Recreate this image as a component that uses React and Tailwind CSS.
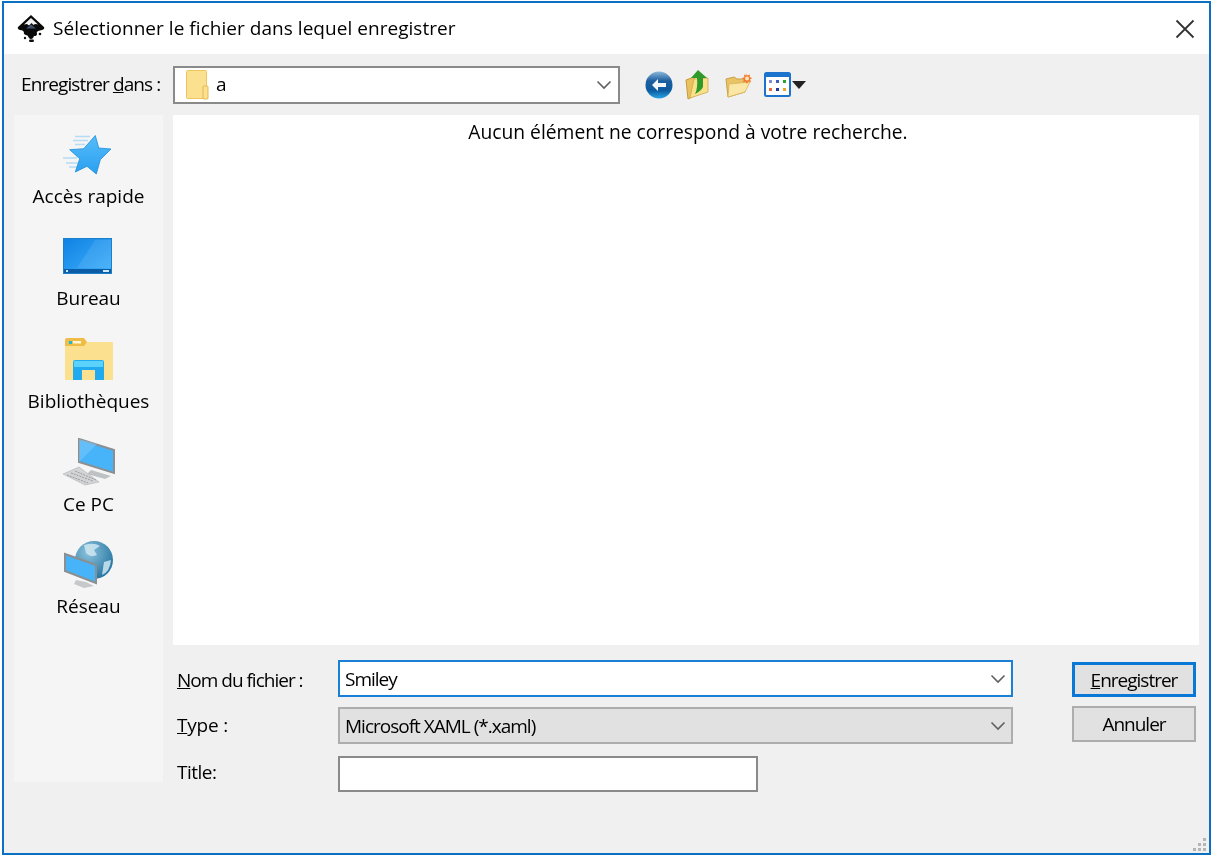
const InkscapeLogo = () => (
  <svg width="28" height="27" viewBox="0 0 28 27">
    <path d="M14 0 L27 12 Q28 14 25 15 L21 16 Q19 17 20 19 Q20 21 17 21 L16 23 Q14 25 12 23 Q11 20 9 20 Q6 19 7 17 Q6 15 3 15 Q0 14 1 12 Z" fill="#0a0a0a" />
    <path d="M14 3 L21 9.5 Q18 8.5 16.5 10 L14.5 8 L12 10.5 L10 9 L7 9.5 Z" fill="#f2f2f2" />
    <path d="M14 9.5 L19 13.5 H9 Z" fill="#3e4f6e" />
    <circle cx="23" cy="19" r="1.3" fill="#111" />
    <circle cx="8" cy="23" r="1.2" fill="#111" />
    <rect x="12" y="24.5" width="5" height="2.5" rx="1.2" fill="#111" />
  </svg>
);

const SmallFolder = () => (
  <svg width="23" height="30" viewBox="0 0 23 30">
    <rect x="0.5" y="0.5" width="20" height="28" rx="1" fill="#fbe08f" stroke="#eec65d" />
    <rect x="17" y="16" width="5" height="13" rx="1" fill="#fbe08f" stroke="#e3b84f" />
  </svg>
);

const Chevron = () => (
  <svg width="16" height="10" viewBox="0 0 16 10" fill="none">
    <path d="M1.5 1.5 L8 8 L14.5 1.5" stroke="#606060" strokeWidth="1.6" />
  </svg>
);

const BackIcon = () => (
  <svg width="28" height="28" viewBox="0 0 28 28">
    <defs>
      <linearGradient id="back" x1="0" y1="0" x2="0" y2="1">
        <stop offset="0" stopColor="#8db8da" />
        <stop offset="0.35" stopColor="#1c5f9f" />
        <stop offset="0.7" stopColor="#0d5a9e" />
        <stop offset="1" stopColor="#25a6e6" />
      </linearGradient>
    </defs>
    <circle cx="14" cy="14" r="13.5" fill="url(#back)" />
    <path d="M7 14 L13 8 V12 H21 V16 H13 V20 Z" fill="#f2f7fb" />
  </svg>
);

const UpFolderIcon = () => (
  <svg width="26" height="30" viewBox="0 0 26 30">
    <path d="M1 10 L9 7 L11 25 L3 29 Z" fill="#e9c25f" stroke="#c79b3a" />
    <path d="M9 9 L23 8 L23 22 L5 28 Z" fill="#f9e08a" stroke="#d2a94a" strokeWidth="0.8" />
    <path d="M13 0 L22 8 L18 8 L18 17 Q16 21 10 24 Q13 18 12 8 L6 8 Z" fill="#2f9a2a" />
  </svg>
);

const NewFolderIcon = () => (
  <svg width="28" height="26" viewBox="0 0 28 26">
    <path d="M1 7 L9 5 L12 7 L20 7 L20 20 L3 25 Z" fill="#e8c466" stroke="#c9a045" />
    <path d="M4 12 L25 10 L20 20 L3 25 Z" fill="#fae7a6" stroke="#d9b356" strokeWidth="0.8" />
    <path d="M21 1 L22.4 3.6 L25 2.4 L24.6 5.2 L27.4 6 L25 7.6 L26.2 10.2 L23.4 9.6 L22 12 L20.6 9.6 L17.8 10.2 L19 7.6 L16.6 6 L19.4 5.2 L19 2.4 L21.6 3.6 Z" fill="#f47a2a" />
    <circle cx="22" cy="6.5" r="2" fill="#fde9c0" />
  </svg>
);

const ViewIcon = () => (
  <svg width="27" height="25" viewBox="0 0 27 25">
    <rect x="1" y="1" width="25" height="23" rx="1.5" fill="#fff" stroke="#1c74cc" strokeWidth="2" />
    <rect x="1" y="1" width="25" height="4" fill="#1c74cc" />
    <rect x="5" y="8" width="3" height="3" fill="#8a8ad0" />
    <rect x="12" y="8" width="3" height="3" fill="#3a62c0" />
    <rect x="19" y="8" width="3" height="3" fill="#2fa32f" />
    <rect x="5" y="16" width="3" height="3" fill="#ef6a3a" />
    <rect x="12" y="16" width="3" height="3" fill="#1f3a96" />
    <rect x="19" y="16" width="3" height="3" fill="#e2a82f" />
  </svg>
);

const StarIcon = () => (
  <svg width="50" height="40" viewBox="0 0 50 40">
    <defs>
      <linearGradient id="star" x1="0" y1="0" x2="0" y2="1">
        <stop offset="0" stopColor="#56bdf9" />
        <stop offset="1" stopColor="#2a9ff0" />
      </linearGradient>
    </defs>
    <path d="M12 1.5 H27 M10 5.5 H25 M12 9.5 H22 M0 23 H14 M3 28 H15 M6 32 H14" stroke="#b5dcf3" strokeWidth="1.4" />
    <path d="M32.3 0.5 L35.7 13 L48 14 L37.3 24.7 L33.3 39 L24 31.3 L12.3 37 L16.7 23.7 L6.7 14.7 L20.7 13.7 Z" fill="url(#star)" stroke="#1a8ddd" strokeWidth="0.8" />
  </svg>
);

const DesktopIcon = () => (
  <svg width="50" height="36" viewBox="0 0 50 36">
    <defs>
      <linearGradient id="desk" x1="0" y1="0" x2="1" y2="1">
        <stop offset="0" stopColor="#0f82e4" />
        <stop offset="1" stopColor="#3fb0fb" />
      </linearGradient>
    </defs>
    <rect x="0.5" y="0.5" width="48" height="35" fill="url(#desk)" stroke="#1d7fc8" />
    <path d="M14 30 L32 2 H48 V30 Z" fill="#fff" opacity="0.09" />
    <rect x="1" y="31" width="47" height="4" fill="#0a5ca6" />
    <rect x="3" y="32" width="2" height="2" fill="#cfe8fa" />
    <rect x="40" y="32" width="6" height="2" fill="#cfe8fa" />
  </svg>
);

const LibraryIcon = () => (
  <svg width="50" height="42" viewBox="0 0 50 42">
    <rect x="1" y="4" width="48" height="38" fill="#fbe08f" />
    <path d="M1 2 Q1 0 3 0 H20 L23 4 L20 8 H1 Z" fill="#efbd45" />
    <rect x="5" y="3" width="3" height="3" fill="#20b6d8" />
    <rect x="9" y="3" width="8" height="2.5" fill="#fff6d6" />
    <path d="M9 42 V24 Q9 22 11 22 H38 Q40 22 40 24 V42 H31 V32 H18 V42 Z" fill="#22aaf0" />
    <rect x="10" y="23" width="29" height="6" fill="#5ad2fb" />
  </svg>
);

const PcIcon = () => (
  <svg width="56" height="48" viewBox="0 0 56 48">
    <path d="M18 1 L53 12 V35 L18 24 Z" fill="#47b3f8" stroke="#8b8f92" strokeWidth="2" />
    <path d="M18 1 L36 6 L20 22 L18 24 Z" fill="#7fcbfb" opacity="0.5" />
    <path d="M30 32 L50 38 L44 41 L26 36 Z" fill="#bfc2c4" />
    <path d="M2 36 L18 29 L38 44 L24 47 Z" fill="#d2d4d6" stroke="#b0b3b5" strokeWidth="0.6" />
    <path d="M6 37 L27 45 M10 35 L32 43 M14 33 L35 42" stroke="#9a9da0" strokeWidth="1" strokeDasharray="2 1" />
  </svg>
);

const NetworkIcon = () => (
  <svg width="50" height="50" viewBox="0 0 50 50">
    <defs>
      <radialGradient id="globe" cx="0.35" cy="0.3" r="0.8">
        <stop offset="0" stopColor="#8cc3dc" />
        <stop offset="1" stopColor="#1f6f9e" />
      </radialGradient>
    </defs>
    <circle cx="30" cy="20" r="19" fill="url(#globe)" />
    <path d="M20 5 Q30 2 36 6 L30 10 L33 15 Q26 18 22 13 Z M40 22 L47 20 Q46 32 38 35 Z" fill="#cfe6f1" opacity="0.85" />
    <path d="M1 14 L32 25 V43 L1 31 Z" fill="#47b3f8" stroke="#8b8f92" strokeWidth="2" />
    <path d="M12 40 L22 42 L30 46 L20 48 L10 44 Z" fill="#c6c9cb" />
  </svg>
);

const Place = ({ icon, label, iconClass }) => (
  <div className="flex flex-col items-center">
    <div className={iconClass}>{icon}</div>
    <span className="text-[19px] leading-6 text-black">{label}</span>
  </div>
);

const Field = ({ className, children }) => (
  <div className={`flex items-center px-[5px] text-[19px] tracking-[-1px] text-black ${className}`}>
    <span className="flex-1 pt-[2px]">{children}</span>
    <Chevron />
  </div>
);

export default function App() {
  return (
    <div className="w-[1213px] h-[857px] bg-white pl-[2px] pr-[2px] pt-[1px] pb-[2px] blur-[0.4px]" style={{ fontFamily: '"Open Sans", "Noto Sans", sans-serif' }}>
      <div className="flex flex-col h-full border-2 border-[#0b6fc2] bg-[#f0f0f0]">
        {/* title bar */}
        <div className="h-[51px] flex-none bg-white flex items-center pl-[13px] pr-[14px]">
          <InkscapeLogo />
          <span className="ml-[8px] flex-1 text-[19px] tracking-[0.04px] text-black">Sélectionner le fichier dans lequel enregistrer</span>
          <svg width="20" height="20" viewBox="0 0 20 20" fill="none">
            <path d="M1.5 1.5 L18.5 18.5 M18.5 1.5 L1.5 18.5" stroke="#333" strokeWidth="1.8" />
          </svg>
        </div>

        {/* toolbar */}
        <div className="h-[61px] flex-none flex items-center pl-[17px]">
          <span className="w-[152px] flex-none whitespace-nowrap text-[19px] tracking-[-0.9px] text-black">Enregistrer <span className="underline">d</span>ans :</span>
          <div className="w-[447px] h-[38px] flex items-center bg-white border-2 border-[#8a8a8a] pl-[11px] pr-[6px]">
            <SmallFolder />
            <span className="ml-[7px] flex-1 text-[19px] text-black">a</span>
            <Chevron />
          </div>
          <div className="ml-[25px] flex items-center">
            <BackIcon />
            <div className="ml-[12px]"><UpFolderIcon /></div>
            <div className="ml-[14px]"><NewFolderIcon /></div>
            <div className="ml-[11px] flex items-center gap-[1px]">
              <ViewIcon />
              <svg width="14" height="8" viewBox="0 0 14 8"><path d="M0 0 H14 L7 8 Z" fill="#222" /></svg>
            </div>
          </div>
        </div>

        {/* main */}
        <div className="flex-1 flex pl-[10px] pr-[10px]">
          <div className="w-[149px] h-[667px] flex-none bg-[#f5f5f5] flex flex-col items-center pt-[20px]">
            <Place icon={<StarIcon />} label="Accès rapide" iconClass="h-[49px]" />
            <Place icon={<DesktopIcon />} label="Bureau" iconClass="mt-[30px] h-[48px]" />
            <Place icon={<LibraryIcon />} label="Bibliothèques" iconClass="mt-[28px] h-[51px]" />
            <Place icon={<PcIcon />} label="Ce PC" iconClass="mt-[25px] h-[54px]" />
            <Place icon={<NetworkIcon />} label="Réseau" iconClass="mt-[24px] h-[54px]" />
          </div>

          <div className="flex-1 ml-[10px] flex flex-col">
            <div className="h-[530px] flex-none bg-white flex justify-center pt-[4px] pl-[4px]">
              <span className="text-[19.25px] leading-[26px] text-black">Aucun élément ne correspond à votre recherche.</span>
            </div>

            <div className="flex pt-[15px]">
              <div className="w-[165px] flex-none flex flex-col pl-[4px] text-[19px] tracking-[-1px] text-black">
                <div className="h-[40px] flex items-center"><span><span className="underline">N</span>om du fichier :</span></div>
                <div className="h-[37px] mt-[7px] flex items-center tracking-[-0.2px]"><span><span className="underline">T</span>ype :</span></div>
                <div className="h-[37px] mt-[10px] flex items-center tracking-[-0.5px]">Title:</div>
              </div>
              <div className="w-[675px] flex-none flex flex-col">
                <Field className="h-[37px] bg-white border-2 border-[#1a7fd6]">Smiley</Field>
                <Field className="h-[37px] mt-[10px] bg-[#e1e1e1] border-2 border-[#adadad]">Microsoft XAML (*.xaml)</Field>
                <div className="w-[420px] h-[36px] mt-[12px] bg-white border-2 border-[#8a8a8a]" />
              </div>
              <div className="ml-[59px] w-[124px] flex-none flex flex-col pt-[2px]">
                <button className="h-[35px] pt-[1px] bg-[#e1e1e1] border-[3px] border-[#0a78d6] text-[19px] tracking-[-1px] text-black flex items-center justify-center"><span><span className="underline">E</span>nregistrer</span></button>
                <button className="h-[36px] pt-[1px] mt-[9px] bg-[#e1e1e1] border-2 border-[#adadad] text-[19px] tracking-[-1px] text-black flex items-center justify-center">Annuler</button>
              </div>
            </div>
          </div>
        </div>

        {/* resize grip */}
        <div className="h-0 relative">
          <svg className="absolute right-[2px] bottom-[2px]" width="14" height="14" viewBox="0 0 14 14" fill="#b5b5b5">
            <rect x="10" y="1" width="3" height="3" /><rect x="5" y="6" width="3" height="3" /><rect x="10" y="6" width="3" height="3" />
            <rect x="0" y="11" width="3" height="3" /><rect x="5" y="11" width="3" height="3" /><rect x="10" y="11" width="3" height="3" />
          </svg>
        </div>
      </div>
    </div>
  );
}
